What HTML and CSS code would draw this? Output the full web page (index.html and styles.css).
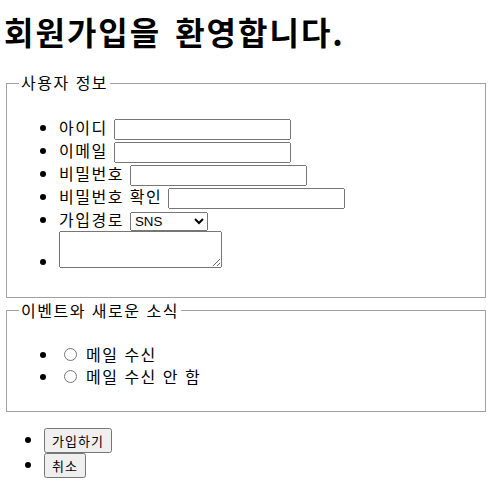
FILE: index.html
```html
<!DOCTYPE html>
<html lang="ko">
<head>
<meta charset="utf-8">
<title>회원가입</title>
<link rel="stylesheet" href="styles.css">
</head>
<body>
<h1 class="title">회원가입을 환영합니다.</h1>
<form class="form">
  <fieldset class="group">
    <legend class="legend">사용자 정보</legend>
    <ul class="list inner">
      <li>아이디 <input class="field" type="text"></li>
      <li>이메일 <input class="field" type="email"></li>
      <li>비밀번호 <input class="field" type="password"></li>
      <li>비밀번호 확인 <input class="field" type="password"></li>
      <li>가입경로 <select class="choice"><option>SNS</option><option>검색</option><option>지인 추천</option></select></li>
      <li><textarea class="memo" cols="20" rows="2"></textarea></li>
    </ul>
  </fieldset>
  <fieldset class="group">
    <legend class="legend">이벤트와 새로운 소식</legend>
    <ul class="list inner">
      <li><input class="radio" type="radio" name="mail"> 메일 수신</li>
      <li><input class="radio" type="radio" name="mail"> 메일 수신 안 함</li>
    </ul>
  </fieldset>
  <ul class="list actions">
    <li><button class="btn" type="submit">가입하기</button></li>
    <li><button class="btn" type="reset">취소</button></li>
  </ul>
</form>
</body>
</html>
```
FILE: styles.css
```css
body {
  margin: 0 4px;
  font-family: "Noto Sans CJK KR", "Liberation Sans", sans-serif;
  font-size: 16px;
  line-height: 1.35;
  letter-spacing: 1.5px;
  color: #000;
  background: #fff;
}
.title {
  font-size: 32px;
  font-weight: bold;
  margin: 12px 0 22px;
  line-height: 1.2;
  letter-spacing: 2px;
  word-spacing: 3px;
}
.group {
  margin: 0 2px 2px;
  border: 1px solid #a0a0a0;
  padding: 5px 12px 8px;
}
.legend {
  padding: 0 2px;
}
.list {
  margin: 16px 0;
  padding-left: 40px;
}
.inner {
  margin-top: 18px;
}
.field {
  font-family: "Liberation Sans", sans-serif;
  box-sizing: border-box;
  width: 177px;
  height: 21px;
  letter-spacing: 0;
}
.choice {
  font-family: "Liberation Sans", sans-serif;
  width: 78px;
  letter-spacing: 0;
}
.memo {
  box-sizing: border-box;
  width: 163px;
  height: 37px;
  vertical-align: baseline;
}
.btn {
  font-family: "Noto Sans CJK KR", sans-serif;
  font-size: 13px;
  letter-spacing: 1px;
  padding: 1px 6px;
}
```
